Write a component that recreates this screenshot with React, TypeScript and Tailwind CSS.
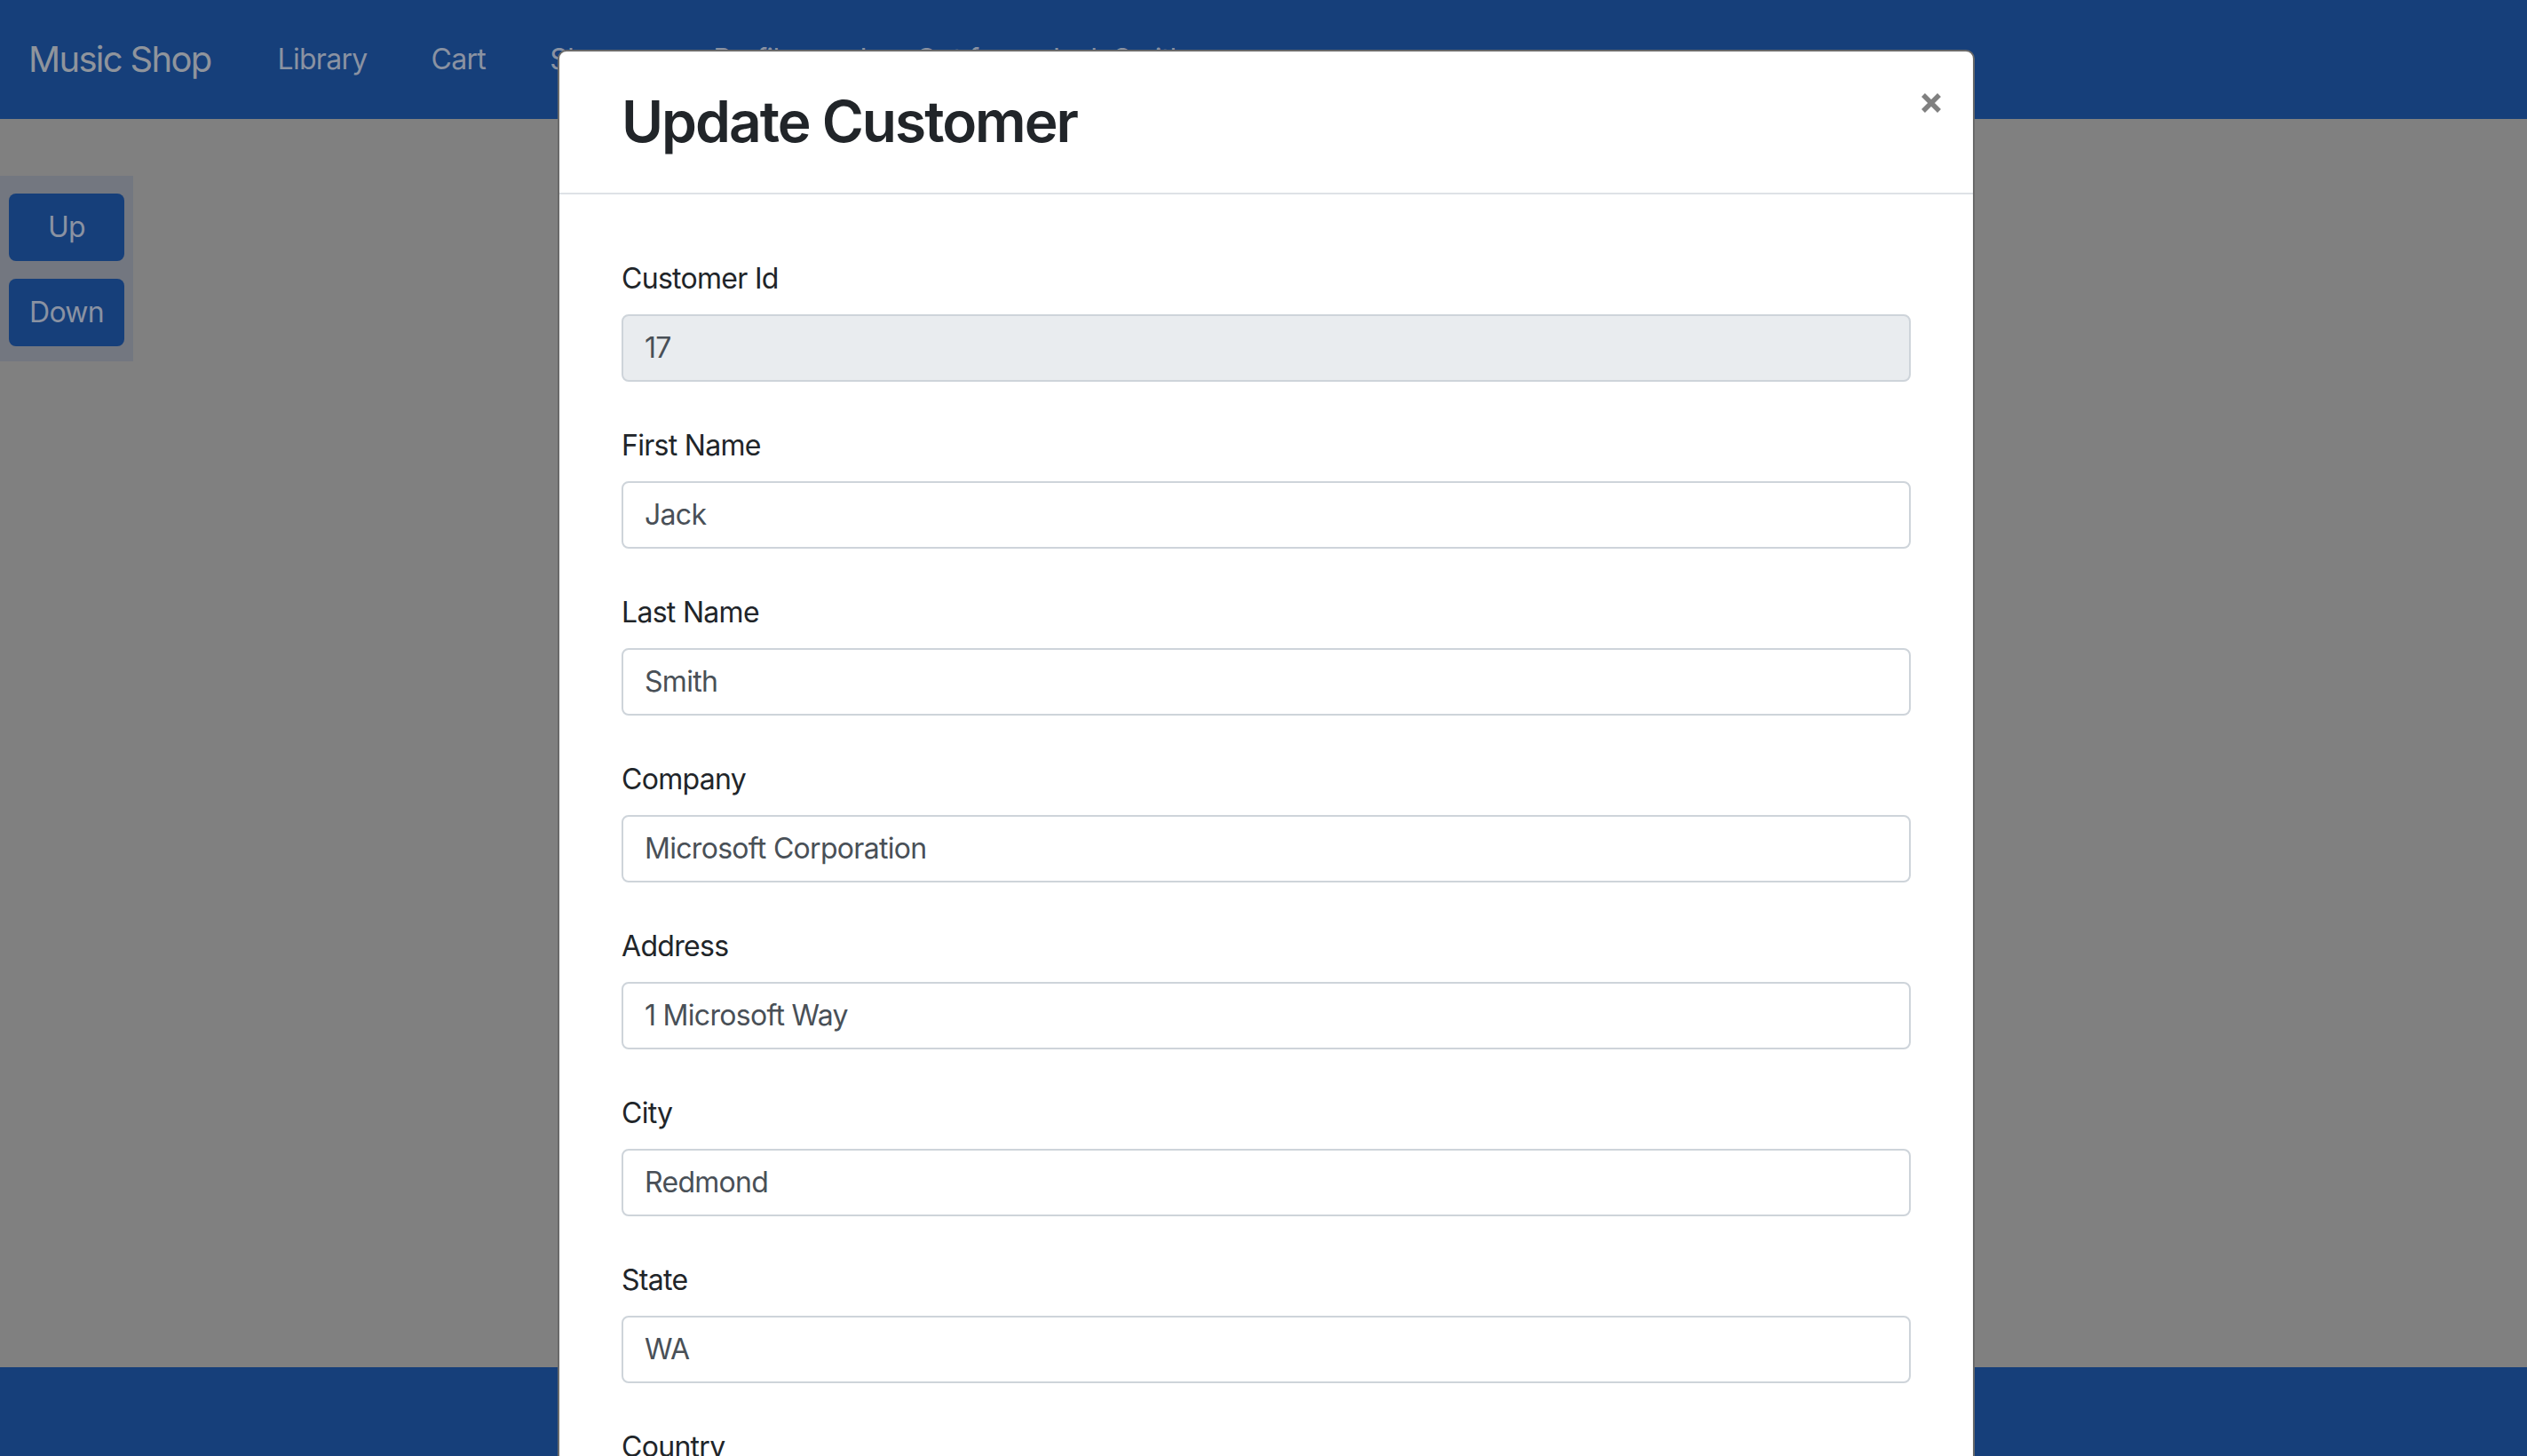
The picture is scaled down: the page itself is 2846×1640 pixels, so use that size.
import React from "react";

const fields: { label: string; value: string; disabled?: boolean }[] = [
  { label: "Customer Id", value: "17", disabled: true },
  { label: "First Name", value: "Jack" },
  { label: "Last Name", value: "Smith" },
  { label: "Company", value: "Microsoft Corporation" },
  { label: "Address", value: "1 Microsoft Way" },
  { label: "City", value: "Redmond" },
  { label: "State", value: "WA" },
  { label: "Country", value: "USA" },
  { label: "Postal Code", value: "98052-8300" },
];

export default function App() {
  return (
    <div
      className="relative w-[2846px] h-[1640px] overflow-hidden bg-[#808080]"
      style={{ fontFamily: "Inter, 'Open Sans', 'Liberation Sans', sans-serif" }}
    >
      {/* Navbar */}
      <nav className="h-[134px] bg-[#163f7a] flex items-center pl-[32px]">
        <span className="text-[40px] leading-[60px] text-[#8f949c] tracking-[-1.7px]">Music Shop</span>
        <div className="ml-[75px] flex items-center gap-[72px] text-[32px] leading-[48px] text-[#8a92a2] tracking-[-0.7px]">
          <span>Library</span>
          <span>Cart</span>
          <span className="w-[112px] whitespace-nowrap">Shop</span>
          <span className="w-[93px]">Profile</span>
          <span className="whitespace-nowrap">Log Out from: Jack Smith</span>
        </div>
      </nav>

      {/* Main area */}
      <div className="h-[1406px] pt-[64px]">
        <div className="w-[150px] bg-[#737780] pt-[20px] pb-[17px] pl-[10px] flex flex-col gap-[20px]">
          <div className="w-[130px] h-[76px] rounded-[8px] bg-[#163f7a] flex items-center justify-center text-[32px] text-[#8a92a2] tracking-[-0.7px]">
            Up
          </div>
          <div className="w-[130px] h-[76px] rounded-[8px] bg-[#163f7a] flex items-center justify-center text-[32px] text-[#8a92a2] tracking-[-0.7px]">
            Down
          </div>
        </div>
      </div>

      {/* Footer */}
      <div className="h-[100px] bg-[#163f7a]" />

      {/* Modal */}
      <div className="absolute left-[628px] top-[56px] w-[1596px] h-[1700px] bg-white border-2 border-[#6a6a6a] rounded-t-[10px]">
        <div className="relative h-[161px] border-b-2 border-[#dee2e6] px-[70px] flex items-center">
          <h2 className="text-[64px] leading-[1.2] font-semibold text-[#212529] tracking-[-2px]">
            Update Customer
          </h2>
          <svg
            className="absolute right-[35px] top-[46px]"
            width="24"
            height="24"
            viewBox="0 0 24 24"
          >
            <path d="M3 3 L21 21 M21 3 L3 21" stroke="#808080" strokeWidth="5.5" strokeLinecap="butt" />
          </svg>
        </div>
        <div className="px-[70px] pt-[71px] flex flex-col gap-[48px] tracking-[-0.7px]">
          {fields.map((f) => (
            <div key={f.label} className="flex flex-col">
              <label className="text-[32px] leading-[48px] text-[#212529] mb-[16px]">{f.label}</label>
              <div
                className={
                  "h-[76px] border-2 border-[#ced4da] rounded-[8px] px-[24px] flex items-center text-[32px] text-[#495057] " +
                  (f.disabled ? "bg-[#e9ecef]" : "bg-white")
                }
              >
                {f.value}
              </div>
            </div>
          ))}
        </div>
      </div>
    </div>
  );
}
